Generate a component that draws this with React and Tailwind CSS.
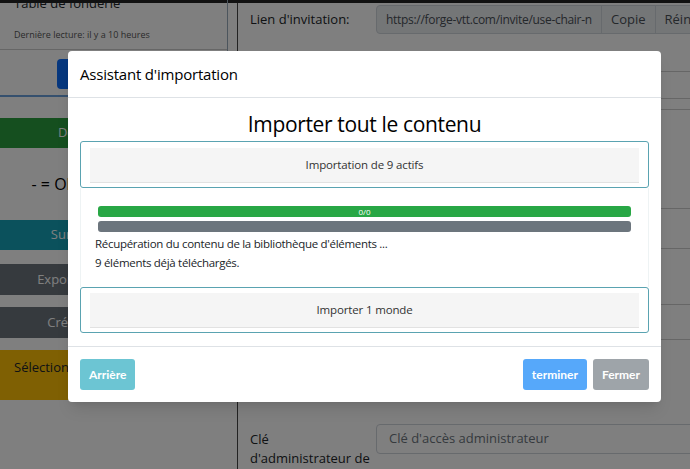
export default function App() {
  return (
    <div className="relative w-[690px] h-[469px] overflow-hidden bg-white font-['Open_Sans',sans-serif] text-[#212529]">
      <div className="h-[3px] bg-[#222]" />
      <div className="flex h-[466px]">
        {/* left panel */}
        <div className="w-[238px] shrink-0 border-r border-[#444]">
          <div className="w-[228px] border-r border-[#9ab]">
            <div className="h-[53px] border-b border-[#ccc] px-[14px]">
              <div className="text-[13px] leading-[13px] -mt-[6px]">Table de fonderie</div>
              <div className="text-[9px] mt-[18px] text-[#555]">Dernière lecture: il y a 10 heures</div>
            </div>
            <div className="h-[47px] border-b-2 border-[#6aa0dc] pl-[57px] pt-[9px]">
              <div className="w-[120px] h-[30px] rounded bg-[#0d6efd]" />
            </div>
          </div>
          <div className="w-[228px] mt-[21px]">
            <div className="h-[30px] bg-[#2a9e3e] text-white text-[13px] flex items-center justify-center whitespace-nowrap">Démarrer la partie</div>
            <div className="h-[72px] flex items-center justify-center text-[16px] text-black whitespace-nowrap">- = Obscurité totale = -</div>
            <div className="h-[30px] bg-[#17a2b8] text-white text-[13px] flex items-center justify-center whitespace-nowrap">Surveillance des jeux</div>
            <div className="h-[31px] mt-[14px] bg-[#6c757d] text-white text-[13px] flex items-center justify-center whitespace-nowrap">Exporter le monde en ZIP</div>
            <div className="h-[31px] mt-[12px] bg-[#6c757d] text-white text-[13px] flex items-center justify-center whitespace-nowrap">Créer une sauvegarde</div>
            <div className="h-[50px] mt-[12px] bg-[#ffc107] text-[13px] px-[14px] pt-[8px]">Sélectionner un autre monde</div>
          </div>
        </div>
        {/* right panel */}
        <div className="flex-1 pl-[12px]">
          <div className="flex items-center h-[29px] mt-[2px]">
            <div className="w-[126px] text-[13px]">Lien d'invitation:</div>
            <div className="flex-1 flex h-full bg-[#e9ecef] border border-[#ced4da] rounded-l text-[13px] text-[#495057] overflow-hidden">
              <div className="w-[224px] shrink-0 px-[9px] flex items-center whitespace-nowrap overflow-hidden text-[12px] tracking-[-0.3px]">https://forge-vtt.com/invite/use-chair-n</div>
              <div className="px-[9px] border-l border-[#ced4da] flex items-center">Copie</div>
              <div className="px-[9px] border-l border-[#ced4da] flex items-center whitespace-nowrap">Réinitialiser</div>
            </div>
          </div>
          <div className="ml-[126px] text-[11px] text-[#666] mt-[14px] whitespace-nowrap overflow-hidden">Partagez ce lien avec vos joueurs</div>
          <div className="border-b border-[#ccc] mt-[6px]" />
          <div className="border-b border-[#ccc] mt-[26px]" />
          <div className="border-b border-[#ccc] mt-[10px]" />
          <div className="border-b border-[#ccc] mt-[98px]" />
          <div className="border-b border-[#ccc] mt-[39px]" />
          <div className="flex justify-end h-[28px]">
            <div className="px-[9px] border border-[#ced4da] bg-[#e9ecef] text-[13px] flex items-center">Br</div>
          </div>
          <div className="border-b border-[#ccc] mt-[27px]" />
          <div className="border-b border-[#ccc] mt-[34px]" />
          <div className="flex justify-end mt-[2px]">
            <div className="w-[30px] text-[11px] overflow-hidden whitespace-nowrap">r.</div>
          </div>
          <div className="flex justify-end mt-[10px]">
            <div className="w-[34px] text-[11px] overflow-hidden whitespace-nowrap">en d'invitation</div>
          </div>
          <div className="flex items-start mt-[39px]">
            <div className="w-[126px] text-[13px] leading-[19px] pt-[6px] whitespace-nowrap">
              Clé
              <br />d'administrateur de
            </div>
            <div className="flex-1 h-[30px] border border-[#ced4da] rounded-l px-[12px] flex items-center text-[13px] text-[#6c757d]">Clé d'accès administrateur</div>
          </div>
        </div>
      </div>

      {/* backdrop */}
      <div className="absolute inset-0 bg-black/50" />

      {/* modal */}
      <div className="absolute left-[68px] top-[51px] w-[593px] h-[351px] bg-white rounded shadow-lg font-['Open_Sans',sans-serif]">
        <div className="h-[47px] border-b border-[#dee2e6] px-[12px] flex items-center text-[15px] tracking-[-0.2px] text-black">Assistant d'importation</div>
        <div className="px-[12px]">
          <div className="text-center text-[21px] tracking-[-0.35px] text-black leading-[28px] mt-[12px] mb-[3px]">Importer tout le contenu</div>
          <div className="border border-[#5aa3b1] rounded-[3px] px-[9px] pt-[6px] pb-[4px]">
            <div className="h-[35px] bg-[#f5f5f5] border-b border-[#e2e2e2] flex items-center justify-center text-[11.5px] tracking-[-0.15px] text-[#333]">Importation de 9 actifs</div>
          </div>
          <div className="border-x border-[#eef3f4] px-[17px] pt-[18px] pb-[15px]">
            <div className="h-[11px] rounded-[3px] bg-[#28a745] text-white text-[8px] leading-[11px] text-center">0/0</div>
            <div className="h-[11px] rounded-[3px] bg-[#6c757d] mt-[4px]" />
            <div className="text-[11.5px] tracking-[-0.3px] leading-[19px] text-[#212529] mt-[2px] -ml-[3px]">
              Récupération du contenu de la bibliothèque d'éléments ...
              <br />9 éléments déjà téléchargés.
            </div>
          </div>
          <div className="border border-[#5aa3b1] rounded-[3px] px-[9px] pt-[5px] pb-[4px]">
            <div className="h-[35px] bg-[#f5f5f5] border-b border-[#e2e2e2] flex items-center justify-center text-[11.5px] tracking-[-0.15px] text-[#333]">Importer 1 monde</div>
          </div>
        </div>
        <div className="mt-[13px] border-t border-[#dee2e6] px-[12px] pt-[12px] flex items-center font-['Lato',sans-serif] text-[12px] font-bold text-white">
          <div className="h-[31px] px-[9px] rounded-[3px] bg-[#6cc5d3] flex items-center">Arrière</div>
          <div className="flex-1" />
          <div className="h-[31px] px-[9px] rounded-[3px] bg-[#56a8fa] flex items-center">terminer</div>
          <div className="h-[31px] px-[9px] ml-[6px] rounded-[3px] bg-[#9ea4a9] flex items-center">Fermer</div>
        </div>
      </div>
    </div>
  );
}
